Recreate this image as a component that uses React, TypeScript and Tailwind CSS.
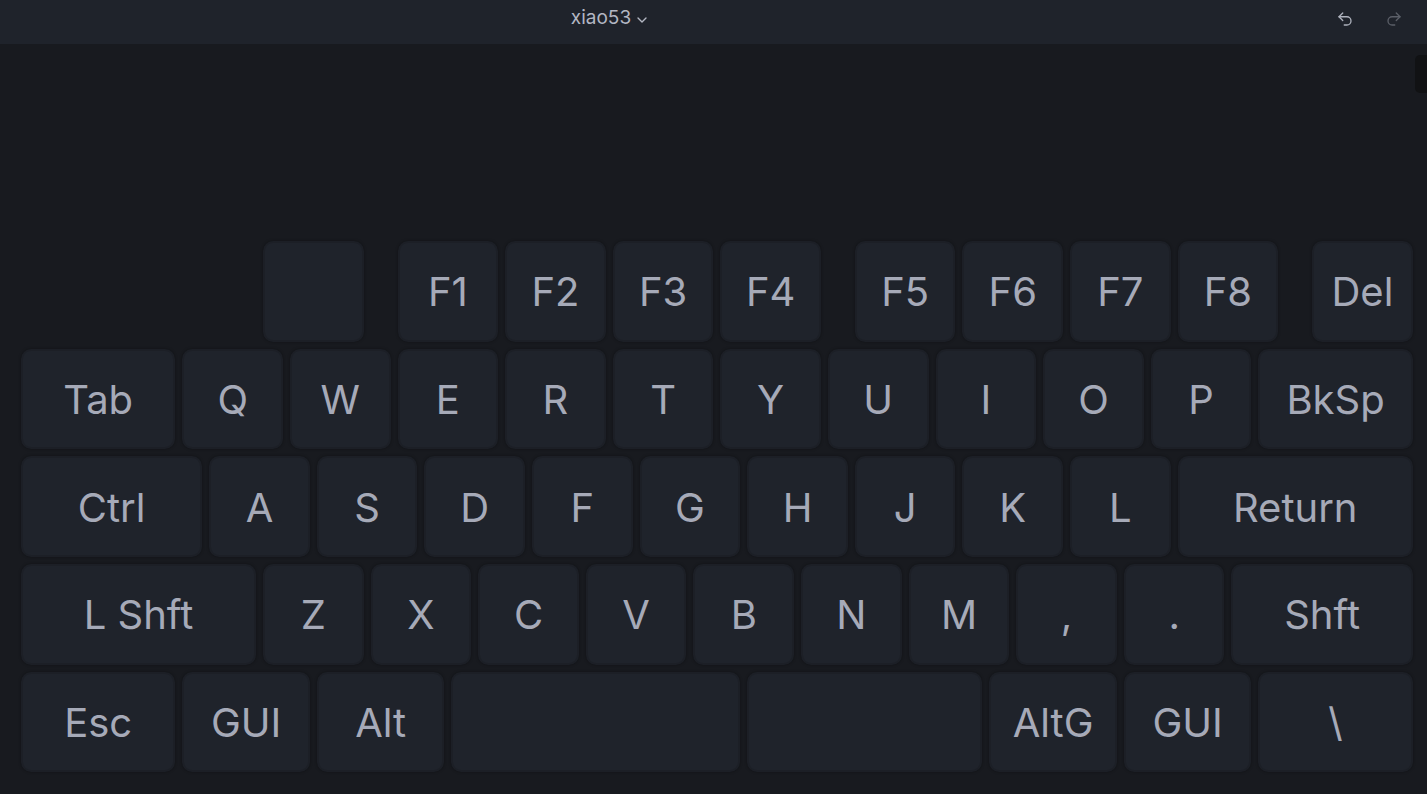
import { Undo2, Redo2, ChevronDown } from 'lucide-react';

type Key = { label?: string; w: number; gap?: boolean };

// one class per key width (u = 107.6px, 7px gap)
const widths: Record<number, string> = {
  0.25: 'w-[19.9px]',
  1: 'w-[100.6px]',
  1.25: 'w-[127.5px]',
  1.5: 'w-[154.4px]',
  1.75: 'w-[181.3px]',
  2.25: 'w-[235.1px]',
  2.75: 'w-[288.9px]',
};

const rows: Key[][] = [
  [
    { w: 2.25, gap: true },
    { w: 1 },
    { w: 0.25, gap: true },
    { label: 'F1', w: 1 },
    { label: 'F2', w: 1 },
    { label: 'F3', w: 1 },
    { label: 'F4', w: 1 },
    { w: 0.25, gap: true },
    { label: 'F5', w: 1 },
    { label: 'F6', w: 1 },
    { label: 'F7', w: 1 },
    { label: 'F8', w: 1 },
    { w: 0.25, gap: true },
    { label: 'Del', w: 1 },
  ],
  [
    { label: 'Tab', w: 1.5 },
    ...'QWERTYUIOP'.split('').map((l) => ({ label: l, w: 1 })),
    { label: 'BkSp', w: 1.5 },
  ],
  [
    { label: 'Ctrl', w: 1.75 },
    ...'ASDFGHJKL'.split('').map((l) => ({ label: l, w: 1 })),
    { label: 'Return', w: 2.25 },
  ],
  [
    { label: 'L Shft', w: 2.25 },
    ...'ZXCVBNM,.'.split('').map((l) => ({ label: l, w: 1 })),
    { label: 'Shft', w: 1.75 },
  ],
  [
    { label: 'Esc', w: 1.5 },
    { label: 'GUI', w: 1.25 },
    { label: 'Alt', w: 1.25 },
    { w: 2.75 },
    { w: 2.25 },
    { label: 'AltG', w: 1.25 },
    { label: 'GUI', w: 1.25 },
    { label: '\\', w: 1.5 },
  ],
];

function KeyCap({ k }: { k: Key }) {
  if (k.gap) return <div className={`${widths[k.w]} shrink-0`} />;
  return (
    <div
      className={`${widths[k.w]} shrink-0 h-[100.7px] rounded-[10px] bg-[#1f232b] border-2 border-[#1c1f26] shadow-[0_0_3px_rgba(0,0,0,0.35)] flex items-center justify-center text-[40px] text-[#a6aab8] leading-none pt-[2px]`}
    >
      {k.label}
    </div>
  );
}

export default function App() {
  return (
    <div className="w-[1427px] h-[794px] overflow-hidden bg-[#181a1f] relative" style={{ fontFamily: 'Inter, "Noto Sans", sans-serif' }}>
      <header className="h-[44px] bg-[#1f232b] flex items-center justify-center relative">
        <button className="flex items-center gap-[3px] text-[19px] text-[#b3b7c3] -mt-[7px] mr-[206px]">
          xiao53
          <ChevronDown className="w-[16px] h-[16px] mt-[3px]" strokeWidth={2} />
        </button>
        <div className="absolute right-[24px] top-[10px] flex items-center gap-[31px]">
          <Undo2 className="w-[18px] h-[18px] text-[#aeb2bd]" strokeWidth={1.75} />
          <Redo2 className="w-[18px] h-[18px] text-[#5b5f68]" strokeWidth={1.75} />
        </div>
      </header>

      <div className="absolute right-0 top-[55px] w-[12px] h-[38px] rounded-l-[5px] bg-[#111214]" />

      <main className="pt-[197px] pl-[21px] flex flex-col gap-[7px]">
        {rows.map((row, i) => (
          <div key={i} className="flex gap-[7px]">
            {row.map((k, j) => (
              <KeyCap key={j} k={k} />
            ))}
          </div>
        ))}
      </main>
    </div>
  );
}
